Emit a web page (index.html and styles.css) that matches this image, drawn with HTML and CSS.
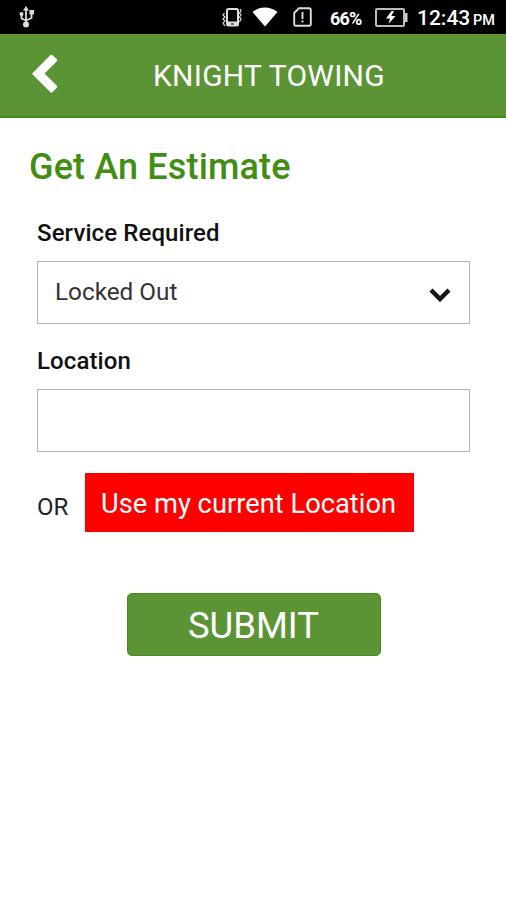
FILE: index.html
```html
<!DOCTYPE html>
<html lang="en">
<head>
  <meta charset="UTF-8" />
  <meta name="viewport" content="width=device-width, initial-scale=1.0"/>
  <title>Knight Towing - Get An Estimate</title>
  <link rel="stylesheet" href="styles.css">
</head>
<body>

  <div class="status-bar">
    <svg class="usb" width="16" height="22" viewBox="0 0 16 22" fill="none" stroke="#ddd" stroke-width="1.8">
      <path d="M7 3v15M2.500 9v3.500l4.500 2M12.500 7v5L7 14.500"/>
      <path d="M7 0l3 4.500H4z" fill="#ddd" stroke="none"/>
      <circle cx="7" cy="18.500" r="3" fill="#ddd" stroke="none"/>
      <circle cx="2.500" cy="8" r="2" fill="#ddd" stroke="none"/>
      <path d="M10.500 4h4.500v4.500h-4.500z" fill="#ddd" stroke="none"/>
    </svg>
    <svg class="vibrate" width="20" height="19" viewBox="0 0 20 19" fill="none" stroke="#ddd">
      <rect x="5" y="1" width="11" height="16.5" rx="1.5" stroke-width="2"/>
      <path d="M5 14h11v3H5z" fill="#ddd"/>
      <path d="M9 16h3" stroke="#000"/>
      <path d="M2.500 5L1 7l2 2-2 2 2 2-2 2 2 3M18 1l1 2-1.500 2 1.500 2-1.500 2 1.500 2-1.500 3" stroke-width="1.2"/>
    </svg>
    <svg class="wifi" width="26" height="20" viewBox="0 0 26 20">
      <path d="M.5 5Q6 .5 13 .5T25.500 5L13 19.500z" fill="#fff"/>
    </svg>
    <svg class="sim" width="19" height="20" viewBox="0 0 19 20" fill="none" stroke="#ddd" stroke-width="1.900">
      <path d="M6 1.200h10q1.800 0 1.800 1.800v14q0 1.800-1.800 1.800H3q-1.800 0-1.800-1.800V6z"/>
      <path d="M9.500 5v7M9.500 13.500v2"/>
    </svg>
    <span class="percent">66%</span>
    <svg class="battery" width="33" height="19" viewBox="0 0 33 19">
      <rect x="1" y="1" width="28" height="17" rx="1" fill="none" stroke="#bbb" stroke-width="2"/>
      <path d="M30 5h2.500v9H30z" fill="#ccc"/>
      <path d="M16.500 3L11 10.500h4L13.500 16l7-8h-4.300L19 3z" fill="#fff"/>
    </svg>
    <span class="time">12:43</span>
    <span class="ampm">PM</span>
  </div>

  <div class="header">
    <a href="#" class="back" aria-label="Back">
      <svg width="26" height="40" viewBox="0 0 26 40">
        <path d="M18.200 1.300q1.200-1.200 2.400 0l4 3.800q1.200 1.200 0 2.400L12.500 19.500l12.100 12.100q1.200 1.200 0 2.400l-4 4q-1.200 1.200-2.400 0L0 19.700z" fill="#fff"/>
      </svg>
    </a>
    <div class="title">KNIGHT TOWING</div>
  </div>

  <div class="container">
    <h1>Get An Estimate</h1>

    <form id="estimate-form">
      <label for="service">Service Required</label>
      <div class="select-box">
        <select id="service">
          <option>Locked Out</option>
        </select>
        <svg class="arrow" width="22" height="14" viewBox="0 0 22 14">
          <path d="M2 2l9 9 9-9" fill="none" stroke="#151515" stroke-width="4.500"/>
        </svg>
      </div>

      <label for="location">Location</label>
      <input type="text" id="location" />

      <div class="current">
        <span class="or">OR</span>
        <button type="button" class="use-location">Use my current Location</button>
      </div>

      <button type="submit" class="submit">SUBMIT</button>
    </form>
  </div>

</body>
</html>
```
FILE: styles.css
```css
* {
  box-sizing: border-box;
}

body {
  font-family: Roboto, sans-serif;
  background-color: #fff;
  margin: 0;
  padding: 0;
}

.status-bar {
  display: flex;
  align-items: center;
  height: 34px;
  padding-left: 19px;
  background-color: #000;
  color: #fff;
  white-space: nowrap;
}

.status-bar svg {
  flex: none;
}

.usb {
  margin-right: 187px;
}

.vibrate {
  margin-right: 10px;
}

.wifi {
  margin-right: 15px;
}

.sim {
  margin-right: 18px;
}

.percent {
  width: 45px;
  padding-top: 2px;
  font-size: 18px;
  font-weight: bold;
  letter-spacing: -0.8px;
}

.battery {
  margin-right: 9px;
}

.time {
  width: 56px;
  padding-top: 1px;
  font-size: 21px;
  font-weight: 500;
}

.ampm {
  padding-top: 6px;
  font-size: 14.5px;
  font-weight: 500;
}

.header {
  display: flex;
  align-items: center;
  height: 84px;
  padding-left: 32px;
  background-color: #5b9434;
  border-bottom: 2px solid #468a1c;
}

.back {
  display: flex;
  width: 121px;
  padding-bottom: 2px;
}

.title {
  color: #fff;
  font-size: 30px;
  letter-spacing: 0.25px;
}

.container {
  padding: 28px 36px 0 37px;
}

h1 {
  margin: 0 0 29px -8px;
  color: #428e14;
  font-size: 36px;
  font-weight: 500;
  letter-spacing: 0.15px;
  line-height: 42px;
}

label {
  display: block;
  margin-bottom: 12px;
  color: #111;
  font-size: 24px;
  font-weight: 500;
  letter-spacing: 0.1px;
  line-height: 32px;
}

.select-box {
  position: relative;
  margin-bottom: 21px;
}

select,
input {
  display: block;
  width: 433px;
  height: 63px;
  padding: 0 17px 2px;
  border: 1px solid #b5b5b5;
  border-radius: 0;
  background: #fff;
  color: #333;
  font-family: inherit;
  font-size: 24.3px;
  appearance: none;
}

.arrow {
  position: absolute;
  top: 27px;
  right: 19px;
}

.current {
  display: flex;
  align-items: center;
  margin-top: 21px;
}

.or {
  width: 48px;
  padding-top: 9px;
  color: #222;
  font-size: 24px;
}

button {
  border: none;
  padding: 0;
  color: #fff;
  font-family: inherit;
  cursor: pointer;
}

.use-location {
  width: 329px;
  height: 59px;
  padding: 2px 2px 0 0;
  background-color: #ff0000;
  font-size: 27.3px;
}

.submit {
  display: block;
  width: 254px;
  height: 63px;
  margin: 61px auto 0;
  padding-top: 1px;
  border: 1px solid #468a1c;
  border-radius: 5px;
  background-color: #5b9434;
  font-size: 36.5px;
}
```
